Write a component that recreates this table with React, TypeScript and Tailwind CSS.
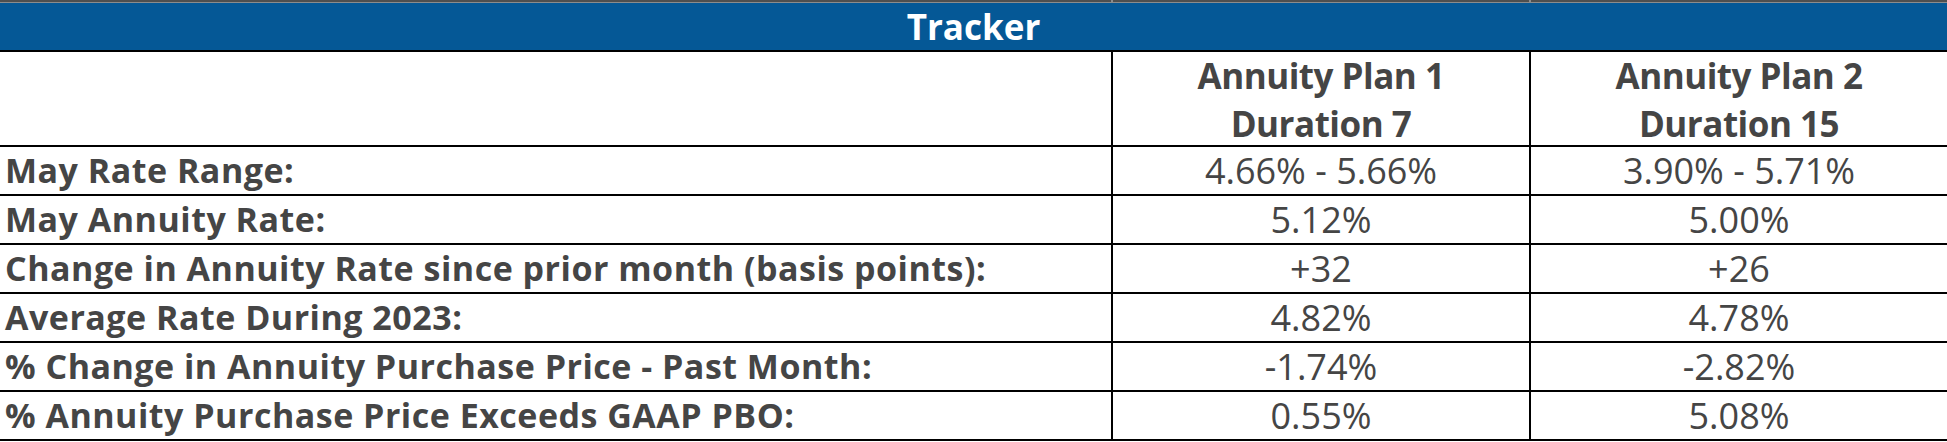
const rows = [
  { label: "May Rate Range:", a: "4.66% - 5.66%", b: "3.90% - 5.71%" },
  { label: "May Annuity Rate:", a: "5.12%", b: "5.00%" },
  { label: "Change in Annuity Rate since prior month (basis points):", a: "+32", b: "+26" },
  { label: "Average Rate During 2023:", a: "4.82%", b: "4.78%" },
  { label: "% Change in Annuity Purchase Price - Past Month:", a: "-1.74%", b: "-2.82%" },
  { label: "% Annuity Purchase Price Exceeds GAAP PBO:", a: "0.55%", b: "5.08%" },
];

export default function App() {
  return (
    <div className="w-[1947px] h-[442px] overflow-hidden bg-white text-[#454545] font-['Open_Sans',sans-serif]">
      {/* cut-off previous row */}
      <div className="flex h-[3px] border-b border-[#8c8c8c] bg-[#4f4f4f]">
        <div className="w-[1113px] border-r-2 border-[#8c8c8c]" />
        <div className="w-[418px] border-r-2 border-[#8c8c8c]" />
        <div className="flex-1" />
      </div>

      <div className="h-[47px] bg-[#055896] text-center text-white font-bold text-[35px] leading-[47px]">Tracker</div>

      <div className="flex h-[97px] border-y-2 border-black">
        <div className="w-[1113px] border-r-2 border-black" />
        <div className="w-[418px] border-r-2 border-black flex flex-col items-center font-bold text-[35px] leading-[47.5px] tracking-[-0.5px]">
          <span>Annuity Plan 1</span>
          <span>Duration 7</span>
        </div>
        <div className="flex-1 flex flex-col items-center font-bold text-[35px] leading-[47.5px] tracking-[-0.5px]">
          <span>Annuity Plan 2</span>
          <span>Duration 15</span>
        </div>
      </div>

      {rows.map((row) => (
        <div key={row.label} className="flex h-[49px] border-b-2 border-black">
          <div className="w-[1113px] border-r-2 border-black pl-[5px] font-bold text-[34px] leading-[47px] tracking-[0.5px] whitespace-nowrap">
            {row.label}
          </div>
          <div className="w-[418px] border-r-2 border-black text-center text-[36px] leading-[47px]">{row.a}</div>
          <div className="flex-1 text-center text-[36px] leading-[47px]">{row.b}</div>
        </div>
      ))}
    </div>
  );
}
